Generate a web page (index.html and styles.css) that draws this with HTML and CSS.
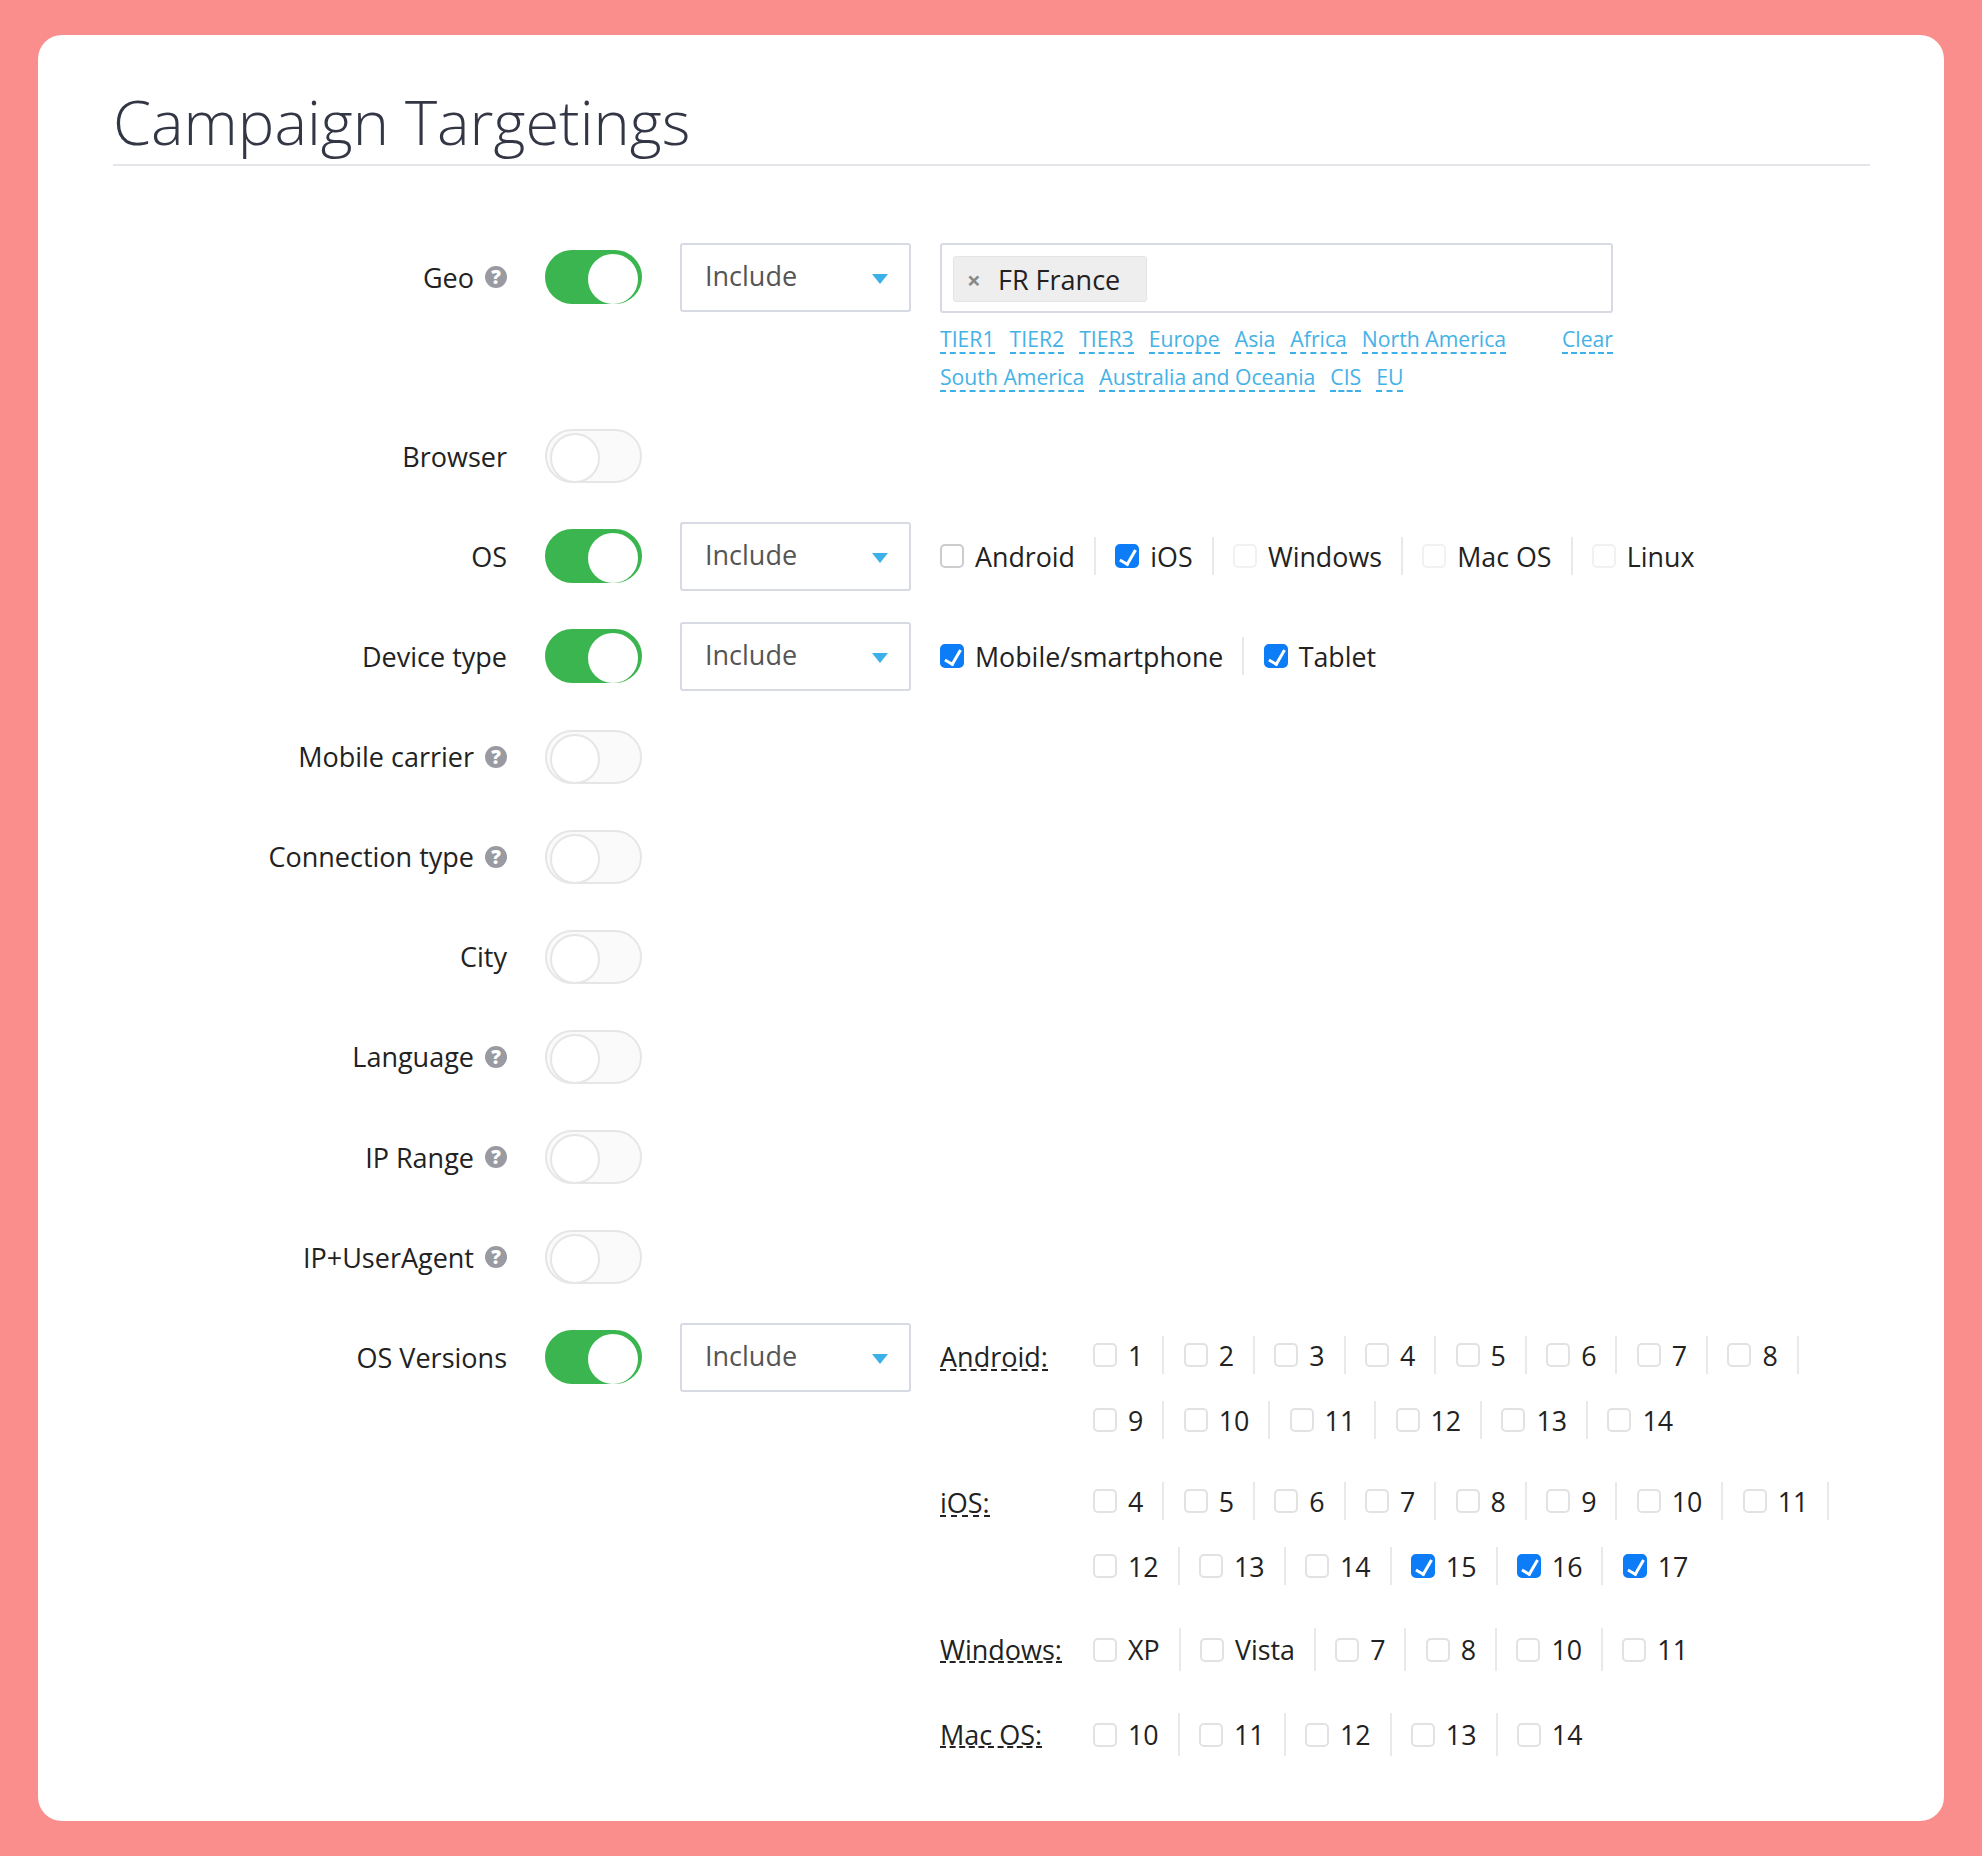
FILE: index.html
```html
<!DOCTYPE html>
<html lang="en">
<head>
    <meta charset="UTF-8">
    <title>Campaign Targetings</title>
    <link rel="stylesheet" href="styles.css">
</head>
<body>
    <div class="card">
        <h1>Campaign Targetings</h1>

        <div class="row row-geo">
            <div class="label">Geo <span class="help">?</span></div>
            <div class="toggle on"></div>
            <div class="select">Include</div>
            <div class="content">
                <div class="tag-input">
                    <span class="tag"><span class="tag-x">×</span>FR France</span>
                </div>
                <div class="quick">
                    <a>TIER1</a><a>TIER2</a><a>TIER3</a><a>Europe</a><a>Asia</a><a>Africa</a><a>North America</a><a class="clear">Clear</a>
                </div>
                <div class="quick">
                    <a>South America</a><a>Australia and Oceania</a><a>CIS</a><a>EU</a>
                </div>
            </div>
        </div>

        <div class="row">
            <div class="label">Browser</div>
            <div class="toggle"></div>
        </div>

        <div class="row">
            <div class="label">OS</div>
            <div class="toggle on"></div>
            <div class="select">Include</div>
            <div class="content checks">
                <label class="check"><span class="box dark"></span>Android</label>
                <label class="check"><span class="box on"></span>iOS</label>
                <label class="check"><span class="box faint"></span>Windows</label>
                <label class="check"><span class="box faint"></span>Mac OS</label>
                <label class="check"><span class="box faint"></span>Linux</label>
            </div>
        </div>

        <div class="row">
            <div class="label">Device type</div>
            <div class="toggle on"></div>
            <div class="select">Include</div>
            <div class="content checks">
                <label class="check"><span class="box on"></span>Mobile/smartphone</label>
                <label class="check"><span class="box on"></span>Tablet</label>
            </div>
        </div>

        <div class="row">
            <div class="label">Mobile carrier <span class="help">?</span></div>
            <div class="toggle"></div>
        </div>
        <div class="row">
            <div class="label">Connection type <span class="help">?</span></div>
            <div class="toggle"></div>
        </div>
        <div class="row">
            <div class="label">City</div>
            <div class="toggle"></div>
        </div>
        <div class="row">
            <div class="label">Language <span class="help">?</span></div>
            <div class="toggle"></div>
        </div>
        <div class="row">
            <div class="label">IP Range <span class="help">?</span></div>
            <div class="toggle"></div>
        </div>
        <div class="row">
            <div class="label">IP+UserAgent <span class="help">?</span></div>
            <div class="toggle"></div>
        </div>

        <div class="row row-last">
            <div class="label">OS Versions</div>
            <div class="toggle on"></div>
            <div class="select">Include</div>
            <div class="content versions">
                <div class="group">
                    <span class="os-name">Android:</span>
                    <div class="group-items">
                        <label class="check"><span class="box"></span>1</label>
                        <label class="check"><span class="box"></span>2</label>
                        <label class="check"><span class="box"></span>3</label>
                        <label class="check"><span class="box"></span>4</label>
                        <label class="check"><span class="box"></span>5</label>
                        <label class="check"><span class="box"></span>6</label>
                        <label class="check"><span class="box"></span>7</label>
                        <label class="check"><span class="box"></span>8</label>
                        <label class="check"><span class="box"></span>9</label>
                        <label class="check"><span class="box"></span>10</label>
                        <label class="check"><span class="box"></span>11</label>
                        <label class="check"><span class="box"></span>12</label>
                        <label class="check"><span class="box"></span>13</label>
                        <label class="check"><span class="box"></span>14</label>
                    </div>
                </div>
                <div class="group">
                    <span class="os-name">iOS:</span>
                    <div class="group-items">
                        <label class="check"><span class="box"></span>4</label>
                        <label class="check"><span class="box"></span>5</label>
                        <label class="check"><span class="box"></span>6</label>
                        <label class="check"><span class="box"></span>7</label>
                        <label class="check"><span class="box"></span>8</label>
                        <label class="check"><span class="box"></span>9</label>
                        <label class="check"><span class="box"></span>10</label>
                        <label class="check"><span class="box"></span>11</label>
                        <label class="check"><span class="box"></span>12</label>
                        <label class="check"><span class="box"></span>13</label>
                        <label class="check"><span class="box"></span>14</label>
                        <label class="check"><span class="box on"></span>15</label>
                        <label class="check"><span class="box on"></span>16</label>
                        <label class="check"><span class="box on"></span>17</label>
                    </div>
                </div>
                <div class="group group-tall">
                    <span class="os-name">Windows:</span>
                    <div class="group-items">
                        <label class="check"><span class="box"></span>XP</label>
                        <label class="check"><span class="box"></span>Vista</label>
                        <label class="check"><span class="box"></span>7</label>
                        <label class="check"><span class="box"></span>8</label>
                        <label class="check"><span class="box"></span>10</label>
                        <label class="check"><span class="box"></span>11</label>
                    </div>
                </div>
                <div class="group group-tall">
                    <span class="os-name">Mac OS:</span>
                    <div class="group-items">
                        <label class="check"><span class="box"></span>10</label>
                        <label class="check"><span class="box"></span>11</label>
                        <label class="check"><span class="box"></span>12</label>
                        <label class="check"><span class="box"></span>13</label>
                        <label class="check"><span class="box"></span>14</label>
                    </div>
                </div>
            </div>
        </div>
    </div>
</body>
</html>
```

FILE: styles.css
```css
* { box-sizing: border-box; }
body {
    margin: 0;
    padding: 35px 38px;
    background-color: #f98e8d;
    font-family: "Open Sans", sans-serif;
    font-size: 27px;
    color: #222;
}
.card {
    height: 1786px;
    padding: 0 74px 0 75px;
    border-radius: 24px;
    background-color: #fff;
}
h1 {
    height: 131px;
    margin: 0 0 77px;
    padding-top: 43px;
    line-height: 86px;
    font-size: 61.4px;
    font-weight: 300;
    color: #333644;
    border-bottom: 2px solid #e4e5e8;
}

/* form rows */
.row {
    display: flex;
    align-items: flex-start;
    min-height: 69px;
    margin-bottom: 31.15px;
}
.row-geo { height: 148px; }
.row-last { margin-bottom: 0; }
.label {
    display: flex;
    justify-content: flex-end;
    align-items: center;
    gap: 11px;
    flex: none;
    width: 394px;
    height: 68px;
    white-space: nowrap;
}
.help {
    width: 22px;
    height: 22px;
    border-radius: 50%;
    background-color: #9a9aa2;
    color: #fff;
    font-size: 19px;
    font-weight: 800;
    line-height: 22px;
    text-align: center;
}

/* switch */
.toggle {
    position: relative;
    flex: none;
    width: 97px;
    height: 54px;
    margin: 7px 38px 0;
    border: 2px solid #e6e6e6;
    border-radius: 27px;
    background-color: #fafafa;
}
.toggle::after {
    content: "";
    position: absolute;
    top: 2px;
    left: 3px;
    width: 46px;
    height: 46px;
    border: 2px solid #e6e6e6;
    border-radius: 50%;
    background-color: #fff;
}
.toggle.on {
    border-color: #3bb54f;
    background-color: #3bb54f;
}
.toggle.on::after {
    left: auto;
    right: 2px;
    border-color: #fff;
}

.select {
    position: relative;
    flex: none;
    width: 231px;
    height: 69px;
    padding-left: 23px;
    border: 2px solid #d7dae3;
    border-radius: 3px;
    color: #555;
    line-height: 62px;
}
.select::after {
    content: "";
    position: absolute;
    top: 29px;
    right: 21px;
    border-style: solid;
    border-width: 10px 8px 0;
    border-color: #3cb0e8 transparent transparent;
}
.content {
    flex: none;
    margin-left: 29px;
}

/* geo tags */
.tag-input {
    width: 673px;
    height: 70px;
    padding: 11px;
    border: 2px solid #d7dae3;
    border-radius: 3px;
}
.tag {
    display: flex;
    align-items: center;
    width: 194px;
    height: 46px;
    padding-left: 13px;
    border: 1px solid #e4e4e4;
    border-radius: 3px;
    background-color: #eee;
}
.tag-x {
    width: 31px;
    color: #888;
    font-size: 24px;
    font-weight: 700;
}
.quick {
    display: flex;
    gap: 15px;
    width: 673px;
    height: 38px;
    font-size: 21.2px;
}
.tag-input + .quick { margin-top: 10px; }
.quick a {
    height: 31px;
    line-height: 32px;
    color: #45b2e6;
    border-bottom: 2px dashed #3cb0e8;
}
.quick .clear { margin-left: auto; }

/* checkboxes */
.checks {
    display: flex;
    align-items: center;
    height: 68px;
}
.check {
    display: flex;
    align-items: center;
    gap: 11px;
    height: 38px;
    padding-right: 19px;
    margin-right: 19.3px;
    border-right: 2px solid #e9e9e9;
    font-size: 26.8px;
    white-space: nowrap;
}
.check:last-child { border-right: none; }
.box {
    position: relative;
    flex: none;
    width: 24px;
    height: 24px;
    border: 2px solid #e2e2e2;
    border-radius: 5px;
    background-color: #fff;
}
.box.dark { border-color: #ccc; }
.box.faint { border-color: #f1f1f1; }
.box.on {
    border-color: #0c7cf7;
    background-color: #0c7cf7;
}
.box.on::after {
    content: "";
    position: absolute;
    top: 1px;
    left: 6px;
    width: 7px;
    height: 15px;
    border: solid #fff;
    border-width: 0 3px 3px 0;
    transform: rotate(30deg);
}

/* os versions */
.versions { padding-top: 13px; }
.group {
    display: grid;
    grid-template-columns: 153px 773px;
    align-items: start;
    margin-bottom: 43px;
}
.group-tall { margin-bottom: 42px; }
.os-name {
    justify-self: start;
    height: 32px;
    margin-top: 3px;
    line-height: 36px;
    border-bottom: 2px dashed #222;
}
.group-items {
    display: flex;
    flex-wrap: wrap;
    row-gap: 27px;
}
.group-tall .check { height: 43px; }
.group-tall .os-name {
    height: 31px;
    margin-top: 4px;
}
```
